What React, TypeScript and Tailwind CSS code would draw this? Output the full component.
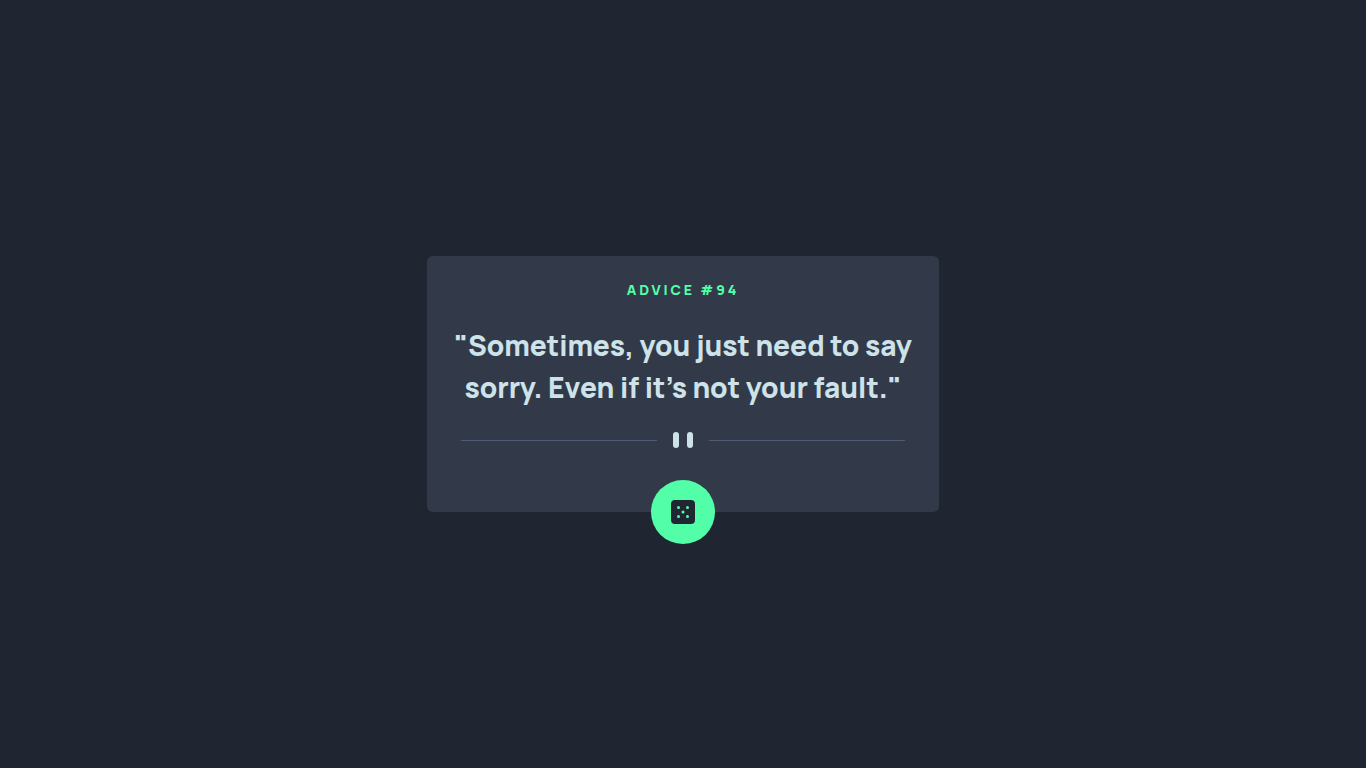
import React, { useState } from 'react';

interface Advice {
  id: number;
  text: string;
}

const ADVICES: Advice[] = [
  { id: 94, text: 'Sometimes, you just need to say sorry. Even if it’s not your fault.' },
  { id: 12, text: 'Don’t promise what you can’t deliver.' },
  { id: 117, text: 'It is easy to sit up and take notice, what’s difficult is getting up.' },
];

const DiceIcon: React.FC = () => (
  <svg width="24" height="24" viewBox="0 0 24 24" aria-hidden="true">
    <rect width="24" height="24" rx="4" fill="#202733" />
    <g fill="#52ffa8">
      <circle cx="7.5" cy="7.5" r="1.5" />
      <circle cx="16.5" cy="7.5" r="1.5" />
      <circle cx="12" cy="12" r="1.5" />
      <circle cx="7.5" cy="16.5" r="1.5" />
      <circle cx="16.5" cy="16.5" r="1.5" />
    </g>
  </svg>
);

const Divider: React.FC = () => (
  <div className="flex w-full items-center gap-4 px-2">
    <div className="h-px flex-1 bg-[#4f5d74]" />
    <svg width="20" height="16" viewBox="0 0 20 16" fill="#cee3e9" aria-hidden="true">
      <rect width="6" height="16" rx="3" />
      <rect x="14" width="6" height="16" rx="3" />
    </svg>
    <div className="h-px flex-1 bg-[#4f5d74]" />
  </div>
);

const App: React.FC = () => {
  const [index, setIndex] = useState(0);
  const advice = ADVICES[index];

  return (
    <main className="flex min-h-screen items-center justify-center bg-[#1f2632] font-['Manrope','Inter',sans-serif]">
      <section className="relative flex w-full max-w-lg flex-col items-center rounded-md bg-[#323a49] px-[26px] pt-6 pb-16 text-center">
        <h1 className="text-sm leading-5 font-extrabold tracking-[0.2em] text-[#52ffa8] uppercase">
          {`Advice #${advice.id}`}
        </h1>
        <p className="mt-6 mb-6 text-[28px] leading-[42px] font-extrabold text-[#cee3e9]">{`"${advice.text}"`}</p>
        <Divider />
        <button
          type="button"
          onClick={() => setIndex((index + 1) % ADVICES.length)}
          aria-label="New advice"
          className="absolute -bottom-8 flex size-16 cursor-pointer items-center justify-center rounded-full bg-[#52ffa8] hover:shadow-[0_0_32px_#52ffa8]"
        >
          <DiceIcon />
        </button>
      </section>
    </main>
  );
};

export default App;
